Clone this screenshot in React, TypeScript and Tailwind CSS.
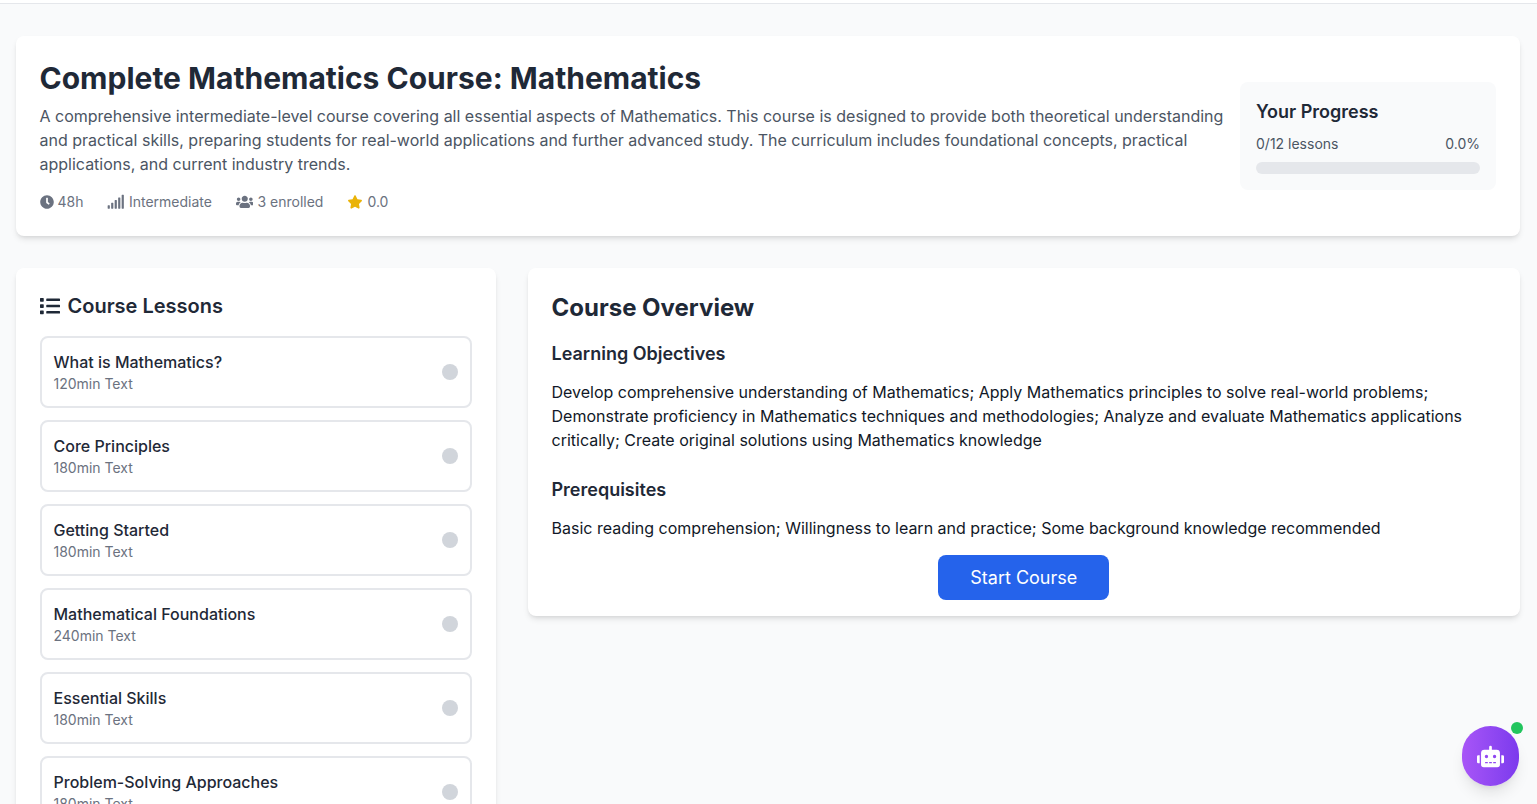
import { FaClock, FaSignal, FaUsers, FaStar, FaList, FaRobot } from "react-icons/fa";

const lessons = [
  ["What is Mathematics?", "120min Text"],
  ["Core Principles", "180min Text"],
  ["Getting Started", "180min Text"],
  ["Mathematical Foundations", "240min Text"],
  ["Essential Skills", "180min Text"],
  ["Problem-Solving Approaches", "180min Text"],
];

function Meta({ icon, text }: { icon: React.ReactNode; text: string }) {
  return (
    <div className="flex items-center gap-1">
      {icon}
      <span>{text}</span>
    </div>
  );
}

export default function App() {
  return (
    <div className="h-screen overflow-hidden bg-[#f9fafb] font-['Inter',sans-serif] text-[#1f2937] relative">
      <div className="h-[4px] bg-white border-b border-[#e5e7eb]" />
      <div className="w-[1536px] pl-[15.5px] pr-4 pt-8">
        <div className="bg-white rounded-lg shadow-md p-6 mb-8 flex items-center gap-4">
          <div className="flex-1 min-w-0">
            <h1 className="text-3xl font-bold leading-9 mb-2">Complete Mathematics Course: Mathematics</h1>
            <p className="text-base leading-6 text-[#4b5563] mb-4">
              A comprehensive intermediate-level course covering all essential aspects of Mathematics. This course is designed to provide both theoretical understanding and practical skills, preparing students for real-world applications and further advanced study. The curriculum includes foundational concepts, practical applications, and current industry trends.
            </p>
            <div className="flex items-center gap-6 text-sm leading-5 text-[#6b7280]">
              <Meta icon={<FaClock className="text-[14px]" />} text="48h" />
              <Meta icon={<FaSignal className="text-[17.5px]" />} text="Intermediate" />
              <Meta icon={<FaUsers className="text-[17.5px]" />} text="3 enrolled" />
              <Meta icon={<FaStar className="w-4 h-4 p-[0.5px] text-[#eab308]" />} text="0.0" />
            </div>
          </div>
          <div className="w-64 shrink-0 bg-[#f9fafb] rounded-lg p-4">
            <h3 className="text-lg leading-7 font-semibold mb-2">Your Progress</h3>
            <div className="flex justify-between text-sm leading-5 text-[#4b5563] mb-2">
              <span>0/12 lessons</span>
              <span>0.0%</span>
            </div>
            <div className="h-3 rounded-full bg-[#e5e7eb]" />
          </div>
        </div>

        <div className="flex items-start gap-8">
          <div className="w-[480px] shrink-0 bg-white rounded-lg shadow-md p-6">
            <h2 className="flex items-center gap-2 text-xl leading-7 font-semibold mb-4">
              <FaList className="text-[20px]" />
              Course Lessons
            </h2>
            <div className="flex flex-col gap-3">
              {lessons.map(([title, sub]) => (
                <div key={title} className="h-[72px] border-2 border-[#e5e7eb] rounded-lg px-3 flex items-center justify-between">
                  <div>
                    <div className="text-base leading-6 font-medium">{title}</div>
                    <div className="text-sm leading-5 text-[#6b7280]">{sub}</div>
                  </div>
                  <div className="w-4 h-4 rounded-full bg-[#d1d5db]" />
                </div>
              ))}
            </div>
          </div>

          <div className="flex-1 bg-white rounded-lg shadow-md px-6 pt-6 pb-4">
            <h2 className="text-2xl leading-8 font-bold mb-4">Course Overview</h2>
            <h3 className="text-lg leading-7 font-semibold mb-3">Learning Objectives</h3>
            <p className="text-base leading-6 text-[#111827] mb-6">
              Develop comprehensive understanding of Mathematics; Apply Mathematics principles to solve real-world problems; Demonstrate proficiency in Mathematics techniques and methodologies; Analyze and evaluate Mathematics applications critically; Create original solutions using Mathematics knowledge
            </p>
            <h3 className="text-lg leading-7 font-semibold mb-3">Prerequisites</h3>
            <p className="text-base leading-6 text-[#111827] mb-[15px]">
              Basic reading comprehension; Willingness to learn and practice; Some background knowledge recommended
            </p>
            <div className="flex justify-center">
              <button className="h-[45px] px-8 rounded-lg bg-[#2563eb] text-white text-lg font-normal">Start Course</button>
            </div>
          </div>
        </div>
      </div>

      <div className="absolute left-[1462px] top-[726px] w-[57px] h-[60px] rounded-full bg-gradient-to-r from-[#a855f7] to-[#7c3aed] shadow-lg flex items-center justify-center text-white">
        <FaRobot className="text-[27px]" />
      </div>
      <div className="absolute left-[1511px] top-[722px] w-3 h-3 rounded-full bg-[#22c55e]" />
    </div>
  );
}
